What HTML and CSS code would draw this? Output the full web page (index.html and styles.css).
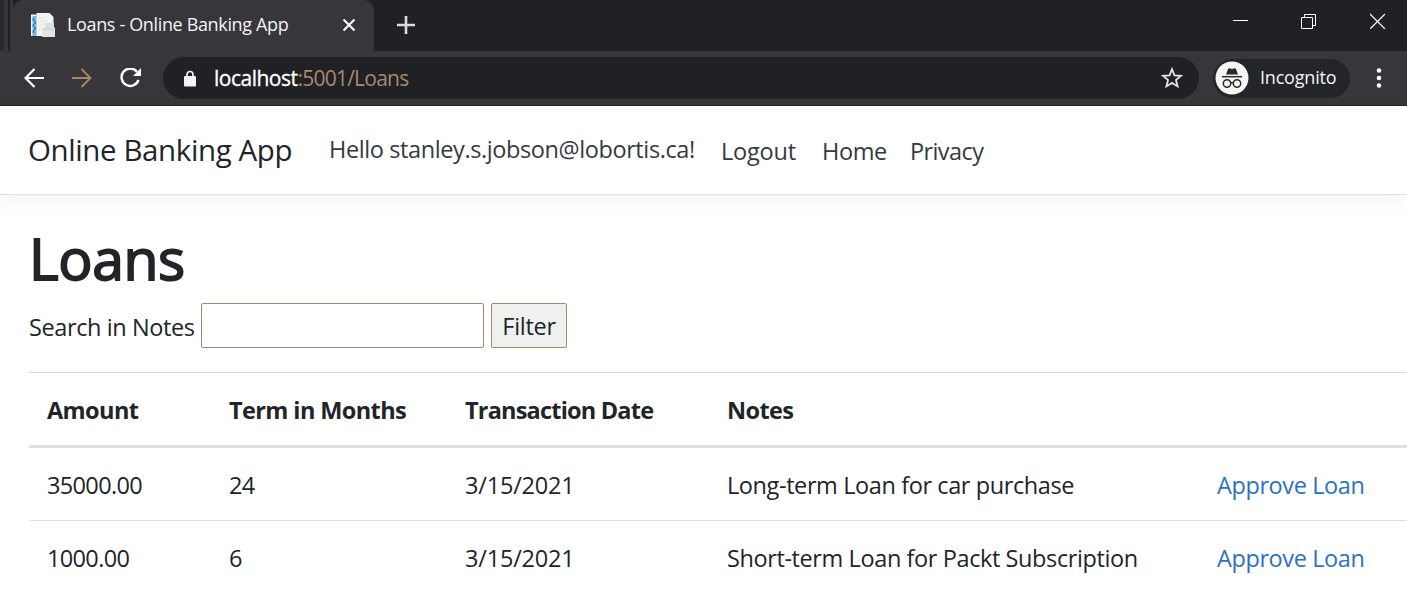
FILE: index.html
```html
<!DOCTYPE html>
<html lang="en">
<head>
<meta charset="utf-8">
<title>Loans - Online Banking App</title>
<link rel="stylesheet" href="styles.css">
</head>
<body>
<div class="browser">
  <div class="tabstrip">
    <div class="strip-edge"></div>
    <div class="tab">
      <svg class="favicon" width="26" height="26" viewBox="0 0 26 26"><path d="M1 2.500h5.500V24H1z" fill="#eef4f2"/><path d="M2.500 4h4v20h-4z" fill="#7fb6e2"/><path d="M3.500 6v3M5 9v3M3.500 12v3M5 15v3M3.500 18v3" stroke="#2d76bd" stroke-width="1.500"/><path d="M6.500 1h13l4 4v19h-17z" fill="#f3f5f1"/><path d="M9 6h7M9 9h9M9 12h6M9 15h4M9 18h3" stroke="#e0e4df"/><path d="M15 11h9v5h-9z" fill="#dcdedb"/><path d="M12 17l2-1.500h11V25H12z" fill="#dfe5e2"/><path d="M13 17h11" stroke="#c6cdca"/></svg>
      <span class="tab-title">Loans - Online Banking App</span>
      <svg class="tab-close" width="14" height="14" viewBox="0 0 14 14"><path d="M1.500 1.500l11 11M12.500 1.500l-11 11" stroke="#fff" stroke-width="2"/></svg>
    </div>
    <svg class="new-tab" width="18" height="18" viewBox="0 0 18 18"><path d="M9 0v18M0 9h18" stroke="#d9dde1" stroke-width="2.600"/></svg>
    <div class="window-controls">
      <svg width="16" height="16" viewBox="0 0 16 16"><path d="M1 7.500h15" stroke="#fff"/></svg>
      <svg width="16" height="16" viewBox="0 0 16 16"><path d="M.5 4.500h11v11H.5zM3.500 4.500v-3h11v11h-3" fill="none" stroke="#fff"/></svg>
      <svg width="16" height="16" viewBox="0 0 16 16"><path d="M0 1l15 15M15 1L0 16" stroke="#f1f1f1" stroke-width="1.300"/></svg>
    </div>
  </div>
  <div class="toolbar">
    <svg class="back" width="20" height="20" viewBox="0 0 20 20"><path d="M20 10H2M10.500 1L1.500 10l9 9" fill="none" stroke="#fff" stroke-width="2.200"/></svg>
    <svg class="forward" width="20" height="20" viewBox="0 0 20 20"><path d="M0 10h18M9.500 1l9 9-9 9" fill="none" stroke="#a58767" stroke-width="1.900"/></svg>
    <svg class="reload" width="22" height="20" viewBox="0 0 22 20"><path d="M17 3.700A8.700 8.700 0 1 0 18.500 12" fill="none" stroke="#fff" stroke-width="2.400"/><path d="M21 0v8h-8z" fill="#fff"/></svg>
    <div class="address">
      <svg class="lock" width="12" height="17" viewBox="0 0 12 17"><path d="M3 7V4.500a3 3 0 0 1 6 0V7" fill="none" stroke="#f4f5f3" stroke-width="1.700"/><rect y="6" width="12" height="10.500" rx="1" fill="#f4f5f3"/></svg>
      <span class="url"><b>localhost</b>:5001/Loans</span>
      <svg class="star" width="22" height="22" viewBox="0 0 22 22"><path d="M11 2.200l2.450 6.100 6.500.5-5 4.200 1.600 6.400L11 15.900l-5.550 3.500L7.050 13l-5-4.200 6.500-.5z" fill="none" stroke="#dfe3e6" stroke-width="1.800"/></svg>
    </div>
    <div class="incognito">
      <svg width="34" height="34" viewBox="0 0 34 34"><circle cx="17" cy="17" r="16.500" fill="#f5f7f3"/><path d="M11 13.500L13 8q.4-1 1.500-.7l2.500.7 2.500-.7q1.100-.3 1.500.7l2 5.500z" fill="#2b2b2e"/><path d="M7 15.700h20" stroke="#2b2b2e" stroke-width="1.500"/><g fill="none" stroke="#2b2b2e" stroke-width="1.500"><circle cx="12" cy="22.500" r="3.700"/><circle cx="22" cy="22.500" r="3.700"/><path d="M15.700 22q1.300-1 2.600 0"/></g></svg>
      <span>Incognito</span>
    </div>
    <svg class="menu" width="6" height="20" viewBox="0 0 6 20"><g fill="#fff"><circle cx="3" cy="2.500" r="2.300"/><circle cx="3" cy="10" r="2.300"/><circle cx="3" cy="17.500" r="2.300"/></g></svg>
  </div>
</div>
<header class="navbar">
  <a class="brand">Online Banking App</a>
  <span class="nav-hello">Hello stanley.s.jobson@lobortis.ca!</span>
  <a class="nav-logout">Logout</a>
  <a class="nav-home">Home</a>
  <a class="nav-privacy">Privacy</a>
</header>
<main>
  <h1>Loans</h1>
  <form class="search">
    <label for="notes">Search in Notes</label>
    <input id="notes" type="text">
    <button type="button">Filter</button>
  </form>
  <table>
    <colgroup><col class="c-amount"><col class="c-term"><col class="c-date"><col class="c-notes"><col></colgroup>
    <thead><tr><th>Amount</th><th>Term in Months</th><th class="th-date">Transaction Date</th><th>Notes</th><th></th></tr></thead>
    <tbody>
      <tr><td class="number">35000.00</td><td class="number">24</td><td class="date">3/15/2021</td><td>Long-term Loan for car purchase</td><td class="action"><a>Approve Loan</a></td></tr>
      <tr><td class="number">1000.00</td><td class="number">6</td><td class="date">3/15/2021</td><td>Short-term Loan for Packt Subscription</td><td class="action"><a>Approve Loan</a></td></tr>
    </tbody>
  </table>
</main>
</body>
</html>
```
FILE: styles.css
```css
* { box-sizing: border-box; }
body { margin: 0; height: 604px; overflow: hidden; background: #fff; color: #212529; font: 23.5px/36px "Open Sans", "Noto Sans", sans-serif; letter-spacing: -.4px; white-space: nowrap; }
svg { display: block; flex: none; }
.browser { height: 106px; background: #37363b; border-bottom: 1px solid #202024; }
.tabstrip { display: flex; height: 51px; background: #202124; }
.strip-edge { width: 13px; background: linear-gradient(90deg, #2a2a2d 0 4px, #37363b 4px 8px, #202124 8px 10px, #37363b 10px); }
.tab { display: flex; align-items: center; width: 361px; padding: 0 0 2px 17px; background: #37363b; border-radius: 10px 10px 0 0; }
.tab-title { width: 222px; margin: -1px 0 0 11px; font-size: 18px; letter-spacing: -.35px; color: #f2f4f5; }
.tab-close { margin-left: 53px; }
.new-tab { margin: 16px 0 0 23px; }
.window-controls { display: flex; gap: 53px; margin: 13px 21px 0 auto; }
.toolbar { display: flex; align-items: center; height: 54px; padding-left: 24px; }
.forward { margin-left: 28px; }
.reload { margin-left: 28px; }
.address { display: flex; align-items: center; width: 1036px; height: 42px; margin-left: 21px; padding: 0 16px 0 21px; border-radius: 21px; background: #202124; }
.url { margin-left: 18px; font-size: 21px; letter-spacing: -.77px; color: #a58a6b; }
.url b { font-weight: 400; letter-spacing: -.5px; color: #fff; -webkit-text-stroke: .3px #fff; }
.star { margin-left: auto; }
.incognito { display: flex; align-items: center; width: 137px; height: 39px; margin-left: 14px; padding-left: 2px; border-radius: 20px; background: #242528; color: #f2f4f5; font-size: 18px; letter-spacing: -.2px; }
.incognito span { margin: -2px 0 0 11px; }
.menu { margin-left: 26px; }
.navbar { display: flex; align-items: center; height: 89px; padding: 2px 0 0 29px; border-bottom: 1px solid #e0deda; box-shadow: 0 6px 16px rgba(40, 90, 60, .06); color: #343a40; }
.brand { width: 300px; padding-bottom: 2px; margin-left: -1px; margin-right: 1px; font-size: 29.500px; color: #212529; }
.nav-hello { width: 392px; padding-bottom: 4px; }
.nav-logout { width: 101px; letter-spacing: -.2px; }
.nav-home { width: 88px; }
.nav-privacy { letter-spacing: -.6px; }
main { padding: 27px 0 0 29px; }
h1 { margin: 0; font-size: 57px; line-height: 72px; font-weight: 400; letter-spacing: -.4px; -webkit-text-stroke: 1.800px #212529; }
.search { display: flex; height: 45px; margin-top: 9px; }
.search label { width: 172px; padding-top: 6px; }
input { width: 283px; height: 45px; margin: 0; border: 1px solid #a1876b; border-radius: 2px; background: #fff; }
button { width: 76px; height: 45px; margin-left: 7px; padding: 0; border: 1px solid #a1876b; border-radius: 2px; background: #eef1ee; color: inherit; font: inherit; letter-spacing: -.3px; }
table { width: 1378px; margin-top: 24px; border-collapse: separate; border-spacing: 0; table-layout: fixed; }
.c-amount { width: 182px; }
.c-term { width: 236px; }
.c-date { width: 262px; }
.c-notes { width: 490px; }
th, td { height: 72px; padding: 2px 0 0 18px; text-align: left; }
th { height: 76px; border-top: 1px solid #e0deda; border-bottom: 3px solid #dededa; font-weight: 700; letter-spacing: -.6px; }
.th-date { letter-spacing: -.8px; }
tbody tr + tr td { height: 73px; border-top: 1px solid #e0deda; }
.number { letter-spacing: -.65px; }
.date { letter-spacing: -.2px; }
.action { color: #2d72c2; letter-spacing: -.4px; }
```
